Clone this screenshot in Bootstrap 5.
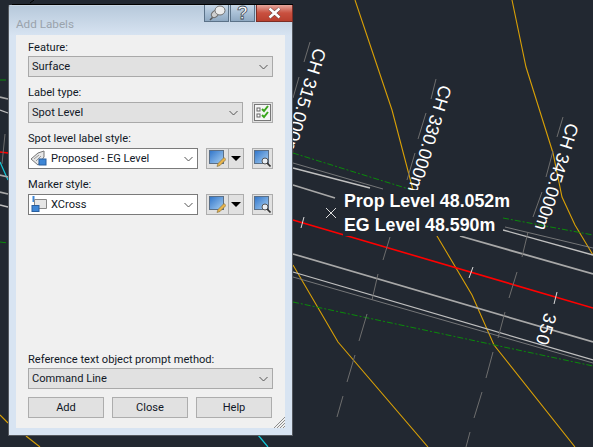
<!DOCTYPE html>
<html lang="en">
<head>
  <meta charset="UTF-8">
  <title>Add Labels</title>
  <link href="https://cdn.jsdelivr.net/npm/bootstrap@5.3.3/dist/css/bootstrap.min.css" rel="stylesheet">
  <style>
    html, body { height: 100%; }
    body { background: #222831; overflow: hidden; font-family: "Liberation Sans", Arial, sans-serif; }
    .cad-canvas { position: absolute; left: 0; top: 0; }
    .cad-canvas text { font-family: "Liberation Sans", Arial, sans-serif; fill: #fff; }
    .ch-text { font-size: 18px; }
    .spot-text { font-size: 17.8px; font-weight: 700; }
    .dlg-window { position: absolute; left: 8px; top: 5px; width: 285px; height: 431px; padding: 0 7px 7px; border: 1px solid #55595f; border-top-color: #c9d6e3; border-radius: 2px 2px 0 0; background: linear-gradient(#b7c9db, #d8e4f2 30px); }
    .dlg-head { height: 29px; }
    .dlg-title { font: 11.7px Roboto, sans-serif; color: #9aa3ac; padding-top: 11px; }
    .dlg-caps { position: absolute; top: -1px; right: -1px; height: 17px; }
    .cap-btn { height: 17px; width: 25px; border: 1px solid #5b7288; border-top: 0; margin-right: 1px; background: linear-gradient(#c6d6e6, #a9c0d6 50%, #8fa9c2); }
    .cap-close { width: 37px; margin-right: 0; border-color: #7d2e26; background: linear-gradient(#e5a69c, #c9503f 50%, #b9402f); }
    .cap-help { font: 700 18px/16px "Liberation Sans", sans-serif; color: #fff; -webkit-text-stroke: .8px #3f4a57; }
    .dlg-panel { background: #f0f0f0; height: 393px; padding: 5px 12px 10px; font: 11.1px/15px Roboto, sans-serif; color: #111827; position: relative; }
    .fld-label { height: 15px; margin-bottom: 2px; }
    .first-label { margin-bottom: 1px; }
    .win-combo { height: 21px; border: 1px solid #a9a9a9; background: #e1e1e1; padding-left: 3px; padding-right: 4px; }
    .win-combo.is-white { background: #fff; border-color: #7a7a7a; padding-left: 2px; }
    .combo-label { width: 215px; }
    .combo-style { width: 171px; }
    .win-btn { height: 21px; border: 1px solid #adadad; background: #e1e1e1; }
    .tool-btn { width: 21px; }
    .split-main { width: 23px; }
    .split-arrow { width: 15px; border-left: 0; }
    .action-btn { width: 76px; }
    .drop-tri { width: 0; height: 0; border-left: 5px solid transparent; border-right: 5px solid transparent; border-top: 5px solid #000; }
    .grip-corner { position: absolute; right: 0; bottom: 0; }
  </style>
</head>
<body>
  <svg class="cad-canvas" width="593" height="447" viewBox="0 0 593 447" fill="none">
    <defs>
      <symbol id="i-chev" viewBox="0 0 9 6"><path d="M.5 1l4 4 4-4" stroke="#555" fill="none"/></symbol>
      <linearGradient id="g-blue" x1="0" y1="0" x2="1" y2="1"><stop offset="0" stop-color="#2f74c9"/><stop offset="1" stop-color="#a9d0f2"/></linearGradient>
      <symbol id="i-edit" viewBox="0 0 17 17"><rect x=".5" y=".5" width="14" height="13" fill="url(#g-blue)" stroke="#5b6f86"/><path d="M8 16.5l1-3 6-6 2 2-6 6z" fill="#e8b44c" stroke="#7a6a3a" stroke-width=".6"/></symbol>
      <symbol id="i-find" viewBox="0 0 17 17"><rect x=".5" y=".5" width="14" height="13" fill="url(#g-blue)" stroke="#5b6f86"/><circle cx="11" cy="11" r="3" fill="#e8eef4" stroke="#555"/><path d="M13 13l3.5 3.5" stroke="#333" stroke-width="1.6"/></symbol>
    </defs>
    <g stroke="#d9a006" stroke-width="1.1">
      <polyline points="355,0 392,110 413,190 437,236 472,295 494,345 575,447"/>
      <polyline points="512,0 526,67 553,153 562,197 575,225 593,255"/>
      <polyline points="293,265 338,342 428,447"/>
      <polyline points="0,415 8,423"/>
      <polyline points="26,436 40,447"/>
    </g>
    <path d="M258 435l10 12M0 162l8 18" stroke="#14c8d8" stroke-width="1.2"/>
    <g stroke="#0a8a0a" stroke-width="1" stroke-dasharray="6 2 2 2">
      <polyline points="293,153 412,190"/>
      <polyline points="503,218 593,235"/>
      <polyline points="293,302 593,366"/>
      <polyline points="0,80 8,80"/>
      <polyline points="0,242 8,243"/>
    </g>
    <g stroke="#ff0000" stroke-width="1.6">
      <polyline points="293,220 593,308"/>
      <polyline points="0,152 8,153"/>
    </g>
    <g stroke="#a8a8a8" stroke-width="1.8">
      <polyline points="293,254 593,342"/>
      <polyline points="293,185 335,198"/>
      <polyline points="460,236 593,274"/>
      <polyline points="0,97 8,99"/>
      <polyline points="0,175 8,177"/>
      <polyline points="0,192 8,194"/>
    </g>
    <g stroke="#c0c0c0" stroke-width="1.3">
      <polyline points="293,272 593,360"/>
      <polyline points="293,168 370,188"/>
      <polyline points="503,230 593,255"/>
      <polyline points="0,110 8,113"/>
      <polyline points="0,205 8,207"/>
    </g>
    <g stroke="#8a8a8a" stroke-width=".8">
      <polyline points="293,277 593,363"/>
      <polyline points="293,163 383,189"/>
      <polyline points="505,227 593,248"/>
    </g>
    <g stroke="#6e6e6e" stroke-width="1">
      <path d="M310 42l-6 20M299 77l-6 21M436 79l-5 20M426 113l-8 26M415 153l-8 27M563 117l-6 20M553 151l-7 26M542 192l-9 25"/>
      <path d="M390 237l-7 23M378 274l-6 26M367 314l-8 27M355 355l-8 27M343 396l-6 21M528 232l-6 25M517 272l-8 26M505 312l-7 26M493 352l-7 26M482 392l-8 26M470 432l-4 15M5 134l-3 30"/>
    </g>
    <g stroke="#dcdcdc" stroke-width="1">
      <path d="M473 267l-4 11M557 292l-3 12M304 217l-3 11M326 208l10 10M336 208l-10 10"/>
    </g>
    <text class="ch-text" transform="translate(314.5,47) rotate(107)">CH 315.000m</text>
    <text class="ch-text" transform="translate(440,84) rotate(107)">CH 330.000m</text>
    <text class="ch-text" transform="translate(567,122) rotate(107)">CH 345.000m</text>
    <text class="ch-text" transform="translate(545,312) rotate(107)" letter-spacing="1">350</text>
    <rect x="343" y="190" width="160" height="46" fill="#222831"/>
    <path d="M12 4.5H293M30 3l4-3" stroke="#000"/>
    <text class="spot-text" x="344" y="207">Prop Level 48.052m</text>
    <text class="spot-text" x="344" y="231">EG Level 48.590m</text>
  </svg>

  <div class="dlg-window">
    <div class="dlg-head"><div class="dlg-title">Add Labels</div></div>
    <div class="dlg-caps d-flex">
      <div class="cap-btn d-flex align-items-center justify-content-center">
        <svg width="21" height="16" viewBox="0 0 21 16"><path d="M4 15l5-5" stroke="#555" stroke-width="1.4"/><ellipse cx="9" cy="9" rx="4" ry="3" fill="#cfcfcf" stroke="#6f6f6f" transform="rotate(-45 9 9)"/><ellipse cx="14" cy="5.5" rx="5" ry="4.5" fill="#ececec" stroke="#6f6f6f"/></svg>
      </div>
      <div class="cap-btn cap-help d-flex align-items-center justify-content-center">?</div>
      <div class="cap-btn cap-close d-flex align-items-center justify-content-center">
        <svg width="15" height="12" viewBox="0 0 15 12"><path d="M2.5 1.5l10 9M12.5 1.5l-10 9" stroke="#5a3a38" stroke-width="3.6"/><path d="M2.5 1.5l10 9M12.5 1.5l-10 9" stroke="#fff" stroke-width="2.6"/></svg>
      </div>
    </div>
    <div class="dlg-panel d-flex flex-column">
      <div class="fld-label first-label">Feature:</div>
      <div class="win-combo d-flex align-items-center justify-content-between">
        <span>Surface</span>
        <svg width="9" height="6"><use href="#i-chev"/></svg>
      </div>

      <div class="fld-label mt-2">Label type:</div>
      <div class="d-flex justify-content-between">
        <div class="win-combo combo-label d-flex align-items-center justify-content-between">
          <span>Spot Level</span>
          <svg width="9" height="6"><use href="#i-chev"/></svg>
        </div>
        <div class="win-btn tool-btn d-flex align-items-center justify-content-center">
          <svg width="17" height="17" viewBox="0 0 17 17"><rect x=".5" y=".5" width="16" height="16" fill="#f5f5f5" stroke="#777"/><rect x="3" y="4" width="3" height="3" fill="#fff" stroke="#666"/><rect x="3" y="10" width="3" height="3" fill="#fff" stroke="#666"/><path d="M8 5l2 2 4-5M8 11l2 2 4-5" stroke="#3aa51c" stroke-width="2" fill="none"/></svg>
        </div>
      </div>

      <div class="fld-label mt-2">Spot level label style:</div>
      <div class="d-flex">
        <div class="win-combo is-white combo-style d-flex align-items-center gap-1">
          <svg width="16" height="17" viewBox="0 0 16 17"><path d="M0 9l7-6 6-2v6l-6 8z" fill="#e6e6e6" stroke="#777"/><path d="M3 9l5-4M5 11l5-5" stroke="#999"/><rect x="8" y="9" width="7" height="6" fill="#3d86d6" stroke="#2a5f9e"/></svg>
          <span>Proposed - EG Level</span>
          <svg class="ms-auto" width="9" height="6"><use href="#i-chev"/></svg>
        </div>
        <div class="d-flex ms-2 me-2">
          <div class="win-btn split-main d-flex align-items-center justify-content-center"><svg width="17" height="17"><use href="#i-edit"/></svg></div>
          <div class="win-btn split-arrow d-flex align-items-center justify-content-center"><div class="drop-tri"></div></div>
        </div>
        <div class="win-btn tool-btn d-flex align-items-center justify-content-center"><svg width="17" height="17"><use href="#i-find"/></svg></div>
      </div>

      <div class="fld-label mt-2">Marker style:</div>
      <div class="d-flex">
        <div class="win-combo is-white combo-style d-flex align-items-center gap-1">
          <svg width="16" height="17" viewBox="0 0 16 17"><path d="M2.5 0v6" stroke="#3d86d6" stroke-width="2"/><path d="M3.5 3.5h12v9h-12z" fill="#e6e6e6" stroke="#888"/><rect x="1" y="9.500" width="7" height="6" fill="#3d86d6" stroke="#2a5f9e"/></svg>
          <span>XCross</span>
          <svg class="ms-auto" width="9" height="6"><use href="#i-chev"/></svg>
        </div>
        <div class="d-flex ms-2 me-2">
          <div class="win-btn split-main d-flex align-items-center justify-content-center"><svg width="17" height="17"><use href="#i-edit"/></svg></div>
          <div class="win-btn split-arrow d-flex align-items-center justify-content-center"><div class="drop-tri"></div></div>
        </div>
        <div class="win-btn tool-btn d-flex align-items-center justify-content-center"><svg width="17" height="17"><use href="#i-find"/></svg></div>
      </div>

      <div class="fld-label first-label mt-auto">Reference text object prompt method:</div>
      <div class="win-combo d-flex align-items-center justify-content-between">
        <span>Command Line</span>
        <svg width="9" height="6"><use href="#i-chev"/></svg>
      </div>
      <div class="d-flex gap-2 mt-2">
        <div class="win-btn action-btn d-flex align-items-center justify-content-center">Add</div>
        <div class="win-btn action-btn d-flex align-items-center justify-content-center">Close</div>
        <div class="win-btn action-btn d-flex align-items-center justify-content-center">Help</div>
      </div>
      <svg class="grip-corner" width="11" height="11" viewBox="0 0 11 11"><path d="M0 11L11 0M3 11l8-8M6 11l5-5M9 11l2-2" stroke="#8c8c8c"/></svg>
    </div>
  </div>
</body>
</html>
